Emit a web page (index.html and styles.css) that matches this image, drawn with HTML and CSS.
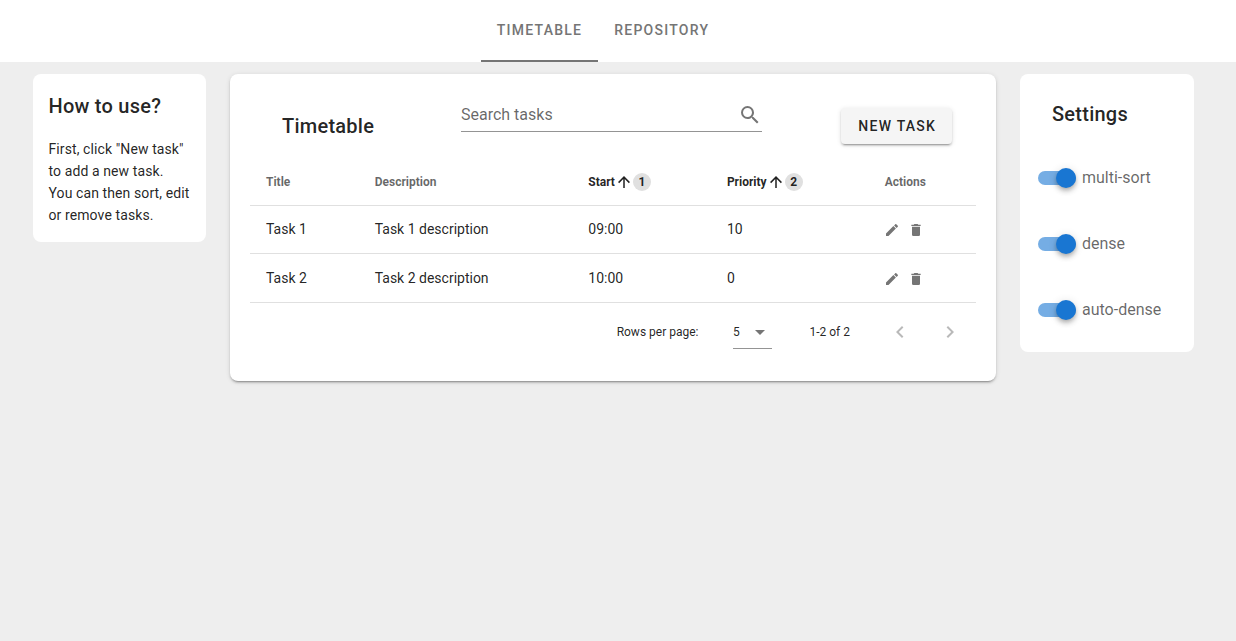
FILE: index.html
```html
<!DOCTYPE html>
<html lang="en">
<head>
<meta charset="utf-8">
<title>Timetable</title>
<link rel="stylesheet" href="styles.css">
</head>
<body>
<svg class="sprite" width="0" height="0" aria-hidden="true">
  <symbol id="magnify" viewBox="0 0 24 24"><path d="M9.5,3A6.5,6.5 0 0,1 16,9.5C16,11.11 15.41,12.59 14.44,13.73L14.71,14H15.5L20.5,19L19,20.5L14,15.5V14.71L13.73,14.44C12.59,15.41 11.11,16 9.5,16A6.5,6.5 0 0,1 3,9.5A6.5,6.5 0 0,1 9.5,3M9.5,5C7,5 5,7 5,9.5C5,12 7,14 9.5,14C12,14 14,12 14,9.5C14,7 12,5 9.5,5Z"/></symbol>
  <symbol id="arrow-up" viewBox="0 0 24 24"><path d="M13,20H11V8L5.5,13.5L4.08,12.08L12,4.16L19.92,12.08L18.5,13.5L13,8V20Z"/></symbol>
  <symbol id="pencil" viewBox="0 0 24 24"><path d="M20.71,7.04C21.1,6.65 21.1,6 20.71,5.63L18.37,3.29C18,2.9 17.35,2.9 16.96,3.29L15.12,5.12L18.87,8.87M3,17.25V21H6.75L17.81,9.93L14.06,6.18L3,17.25Z"/></symbol>
  <symbol id="delete" viewBox="0 0 24 24"><path d="M19,4H15.5L14.5,3H9.5L8.5,4H5V6H19M6,19A2,2 0 0,0 8,21H16A2,2 0 0,0 18,19V7H6V19Z"/></symbol>
  <symbol id="menu-down" viewBox="0 0 24 24"><path d="M7,10L12,15L17,10H7Z"/></symbol>
  <symbol id="chevron-left" viewBox="0 0 24 24"><path d="M15.41,16.58L10.83,12L15.41,7.41L14,6L8,12L14,18L15.41,16.58Z"/></symbol>
  <symbol id="chevron-right" viewBox="0 0 24 24"><path d="M8.59,16.58L13.17,12L8.59,7.41L10,6L16,12L10,18L8.59,16.58Z"/></symbol>
</svg>

<nav class="tabs">
  <a class="tab tab-active">Timetable</a>
  <a class="tab">Repository</a>
</nav>

<main class="content">
  <aside class="card help">
    <h2 class="heading">How to use?</h2>
    <p class="help-text">First, click "New task"<br>to add a new task.<br>You can then sort, edit<br>or remove tasks.</p>
  </aside>

  <section class="card timetable">
    <header class="toolbar">
      <h2 class="heading toolbar-title">Timetable</h2>
      <div class="search"><span>Search tasks</span><svg class="icon"><use href="#magnify"/></svg></div>
      <button class="new-task">New task</button>
    </header>

    <div class="table">
      <div class="row row-head">
        <div>Title</div>
        <div>Description</div>
        <div class="sorted">Start<svg class="icon icon-sort"><use href="#arrow-up"/></svg><span class="badge">1</span></div>
        <div class="sorted">Priority<svg class="icon icon-sort"><use href="#arrow-up"/></svg><span class="badge">2</span></div>
        <div>Actions</div>
      </div>
      <div class="row row-first">
        <div>Task 1</div><div>Task 1 description</div><div>09:00</div><div>10</div>
        <div class="actions"><svg class="icon icon-small"><use href="#pencil"/></svg><svg class="icon icon-small"><use href="#delete"/></svg></div>
      </div>
      <div class="row row-last">
        <div>Task 2</div><div>Task 2 description</div><div>10:00</div><div>0</div>
        <div class="actions"><svg class="icon icon-small"><use href="#pencil"/></svg><svg class="icon icon-small"><use href="#delete"/></svg></div>
      </div>
    </div>

    <footer class="pager">
      <span class="pager-label">Rows per page:</span>
      <div class="select"><span>5</span><svg class="icon"><use href="#menu-down"/></svg></div>
      <span class="range">1-2 of 2</span>
      <svg class="icon icon-disabled"><use href="#chevron-left"/></svg>
      <svg class="icon icon-disabled"><use href="#chevron-right"/></svg>
    </footer>
  </section>

  <aside class="card settings">
    <h2 class="heading settings-title">Settings</h2>
    <div class="switch"><span class="track"><span class="thumb"></span></span><span class="switch-label">multi-sort</span></div>
    <div class="switch"><span class="track"><span class="thumb"></span></span><span class="switch-label">dense</span></div>
    <div class="switch"><span class="track"><span class="thumb"></span></span><span class="switch-label">auto-dense</span></div>
  </aside>
</main>
</body>
</html>
```

FILE: styles.css
```css
* { box-sizing: border-box; }

body {
  margin: 0;
  min-height: 100vh;
  background: #eee;
  color: rgba(0, 0, 0, 0.87);
  font-family: Roboto, sans-serif;
  font-size: 16px;
}

.sprite { display: block; width: 0; height: 0; }

.icon {
  display: block;
  flex: none;
  width: 24px;
  height: 24px;
  fill: #757575;
}
.icon-small { width: 16px; height: 16px; }
.icon-sort { width: 18px; height: 18px; fill: #212121; }
.icon-disabled { fill: #b9b9b9; }

.tabs {
  display: flex;
  justify-content: center;
  height: 62px;
  padding-right: 30px;
  background: #fff;
}
.tab {
  padding: 0 16px;
  border-bottom: 2px solid transparent;
  color: #757575;
  font-size: 14px;
  font-weight: 500;
  letter-spacing: 1.25px;
  line-height: 60px;
  text-transform: uppercase;
}
.tab-active { border-color: #757575; }

.content {
  display: grid;
  grid-template-columns: 173px 766px 174px;
  gap: 24px;
  align-items: start;
  padding: 12px 0 0 33px;
}
.card { min-width: 0; border-radius: 8px; background: #fff; }

.heading {
  margin: 0;
  font-size: 20px;
  font-weight: 500;
  letter-spacing: 0.25px;
  line-height: 32px;
}

.help { height: 168px; padding: 16px 0 0 15.5px; }
.help-text {
  margin: 16px 0 0;
  font-size: 14px;
  letter-spacing: 0.1px;
  line-height: 22px;
  white-space: nowrap;
}

.timetable {
  height: 307px;
  padding: 0 20px;
  box-shadow: 0 3px 1px -2px rgba(0,0,0,.2), 0 2px 2px 0 rgba(0,0,0,.14), 0 1px 5px 0 rgba(0,0,0,.12);
}
.toolbar {
  display: grid;
  grid-template-columns: 179px 301px 1fr;
  align-items: center;
  height: 84px;
  padding: 20px 24px 0 32px;
}
.search {
  display: flex;
  align-items: center;
  justify-content: space-between;
  align-self: start;
  height: 38px;
  padding-top: 4px;
  border-bottom: 1px solid #949494;
  color: rgba(0, 0, 0, 0.6);
}
.new-task {
  justify-self: end;
  width: 111px;
  height: 36px;
  padding: 0 0 0 1.5px;
  border: 0;
  border-radius: 4px;
  background: #f5f5f5;
  color: inherit;
  font: 500 14px/36px Roboto, sans-serif;
  letter-spacing: 1.25px;
  text-transform: uppercase;
  box-shadow: 0 3px 1px -2px rgba(0,0,0,.2), 0 2px 2px 0 rgba(0,0,0,.14), 0 1px 5px 0 rgba(0,0,0,.12);
}

.row {
  display: grid;
  grid-template-columns: 108.7px 213.6px 138.6px 157.8px 1fr;
  align-items: center;
  height: 48px;
  padding-left: 16px;
  border-bottom: 1px solid #e0e0e0;
  font-size: 14px;
}
.row-first { padding-bottom: 1px; }
.row-last { height: 49px; }
.row-head {
  color: rgba(0, 0, 0, 0.6);
  font-size: 12px;
  font-weight: 700;
}
.sorted { display: flex; align-items: center; color: rgba(0, 0, 0, 0.87); }
.badge {
  width: 18px;
  height: 18px;
  border-radius: 50%;
  background: #e0e0e0;
  line-height: 18px;
  text-align: center;
}
.actions { display: flex; gap: 8px; margin-left: -0.6px; padding-top: 1px; }
.row-first .actions { padding-top: 2px; }

.pager {
  display: flex;
  align-items: center;
  height: 58px;
  padding-right: 14px;
  justify-content: flex-end;
  font-size: 12px;
}
.select {
  display: flex;
  align-items: center;
  justify-content: space-between;
  width: 39px;
  height: 34px;
  margin: 0 37.5px 0 34.5px;
  border-bottom: 1px solid #949494;
}
.range { margin-right: 38px; }
.icon-disabled + .icon-disabled { margin-left: 26px; }

.settings { height: 278px; padding: 24px 0 0 18px; }
.settings-title { margin-bottom: 15px; padding-left: 14px; }
.switch {
  display: flex;
  align-items: center;
  gap: 6px;
  height: 66px;
  color: rgba(0, 0, 0, 0.6);
}
.switch-label { padding-bottom: 2px; }
.track {
  display: flex;
  align-items: center;
  justify-content: flex-end;
  width: 38px;
  height: 14px;
  border-radius: 7px;
  background: #75ade4;
}
.thumb {
  width: 20px;
  height: 20px;
  border-radius: 50%;
  background: #1976d2;
  box-shadow: 0 2px 4px -1px rgba(0,0,0,.2), 0 4px 5px 0 rgba(0,0,0,.14), 0 1px 10px 0 rgba(0,0,0,.12);
}
```
